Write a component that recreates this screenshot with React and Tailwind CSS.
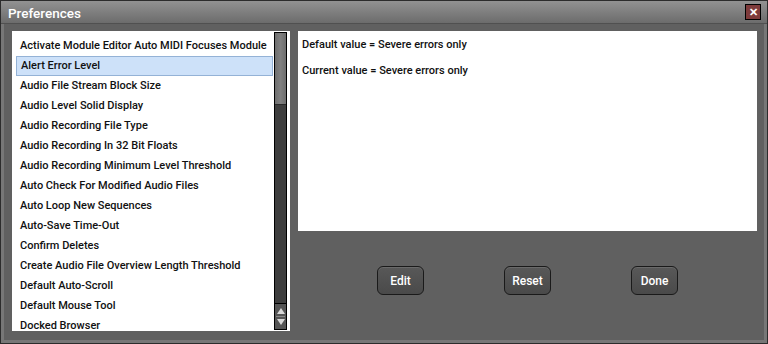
const items = [
  'Activate Module Editor Auto MIDI Focuses Module',
  'Alert Error Level',
  'Audio File Stream Block Size',
  'Audio Level Solid Display',
  'Audio Recording File Type',
  'Audio Recording In 32 Bit Floats',
  'Audio Recording Minimum Level Threshold',
  'Auto Check For Modified Audio Files',
  'Auto Loop New Sequences',
  'Auto-Save Time-Out',
  'Confirm Deletes',
  'Create Audio File Overview Length Threshold',
  'Default Auto-Scroll',
  'Default Mouse Tool',
  'Docked Browser',
];

function Btn({ children }) {
  return (
    <button className="w-[47px] h-[29px] rounded-[6px] border border-[#1a1a1a] bg-gradient-to-b from-[#585858] to-[#4a4a4a] text-white text-[12px] font-medium shadow-[inset_0_1px_0_#6a6a6a]">
      {children}
    </button>
  );
}

export default function App() {
  return (
    <div
      className="w-[768px] h-[344px] bg-[#2c2c2c] p-px flex flex-col"
      style={{ fontFamily: 'Roboto, "Liberation Sans", sans-serif' }}
    >
      <div className="h-[23px] shrink-0 bg-gradient-to-b from-[#929292] to-[#6c6c6c] border-b border-[#505050] flex items-center justify-between pl-[7px] pr-[6px] pt-[2px]">
        <span className="text-white text-[13.5px] font-medium">Preferences</span>
        <div className="w-[16px] h-[16px] -mt-[2px] bg-[#7e3b3b] border border-black flex items-center justify-center text-white text-[11px] font-bold leading-none">
          ✕
        </div>
      </div>
      <div className="flex-1 bg-[#777777] px-[3px] pb-[3px]">
        <div className="h-full bg-[#606060] flex gap-[8px] pl-[8px] pr-[7px] pt-[7px] pb-[7px]">
          <div className="w-[278px] h-[300px] bg-white flex pl-[4px] pr-[3px] py-[1px]">
            <div className="flex-1 overflow-hidden pt-[4px]">
              {items.map((t, i) => (
                <div
                  key={t}
                  className={`h-[20px] flex items-center pl-[4px] text-[11px] font-medium text-[#111] whitespace-nowrap ${
                    i === 1 ? 'bg-[#cde1f9] border border-[#94b2d6] pl-[3px]' : ''
                  }`}
                >
                  {t}
                </div>
              ))}
            </div>
            <div className="w-[13px] ml-[1px] bg-[#3e3e3e] border border-black flex flex-col">
              <div className="h-[72px] bg-gradient-to-r from-[#6e6e6e] via-[#808080] to-[#6e6e6e] border-b border-[#2a2a2a]" />
              <div className="flex-1" />
              <div className="h-[26px] bg-[#555555] border-t border-black flex flex-col items-center justify-center gap-[2px]">
                <div className="w-0 h-0 border-l-[4px] border-r-[4px] border-b-[6px] border-l-transparent border-r-transparent border-b-[#d8d8d8]" />
                <div className="w-[9px] h-px bg-[#888]" />
                <div className="w-0 h-0 border-l-[4px] border-r-[4px] border-t-[6px] border-l-transparent border-r-transparent border-t-[#d8d8d8]" />
              </div>
            </div>
          </div>
          <div className="flex-1 flex flex-col">
            <div className="h-[200px] bg-white px-[4px] pt-[5px]">
              <div className="h-[18px] flex items-center text-[11px] font-medium text-[#111]">
                Default value = Severe errors only
              </div>
              <div className="h-[8px]" />
              <div className="h-[18px] flex items-center text-[11px] font-medium text-[#111]">
                Current value = Severe errors only
              </div>
            </div>
            <div className="flex justify-center gap-[80px] mt-[35px]">
              <Btn>Edit</Btn>
              <Btn>Reset</Btn>
              <Btn>Done</Btn>
            </div>
          </div>
        </div>
      </div>
    </div>
  );
}
